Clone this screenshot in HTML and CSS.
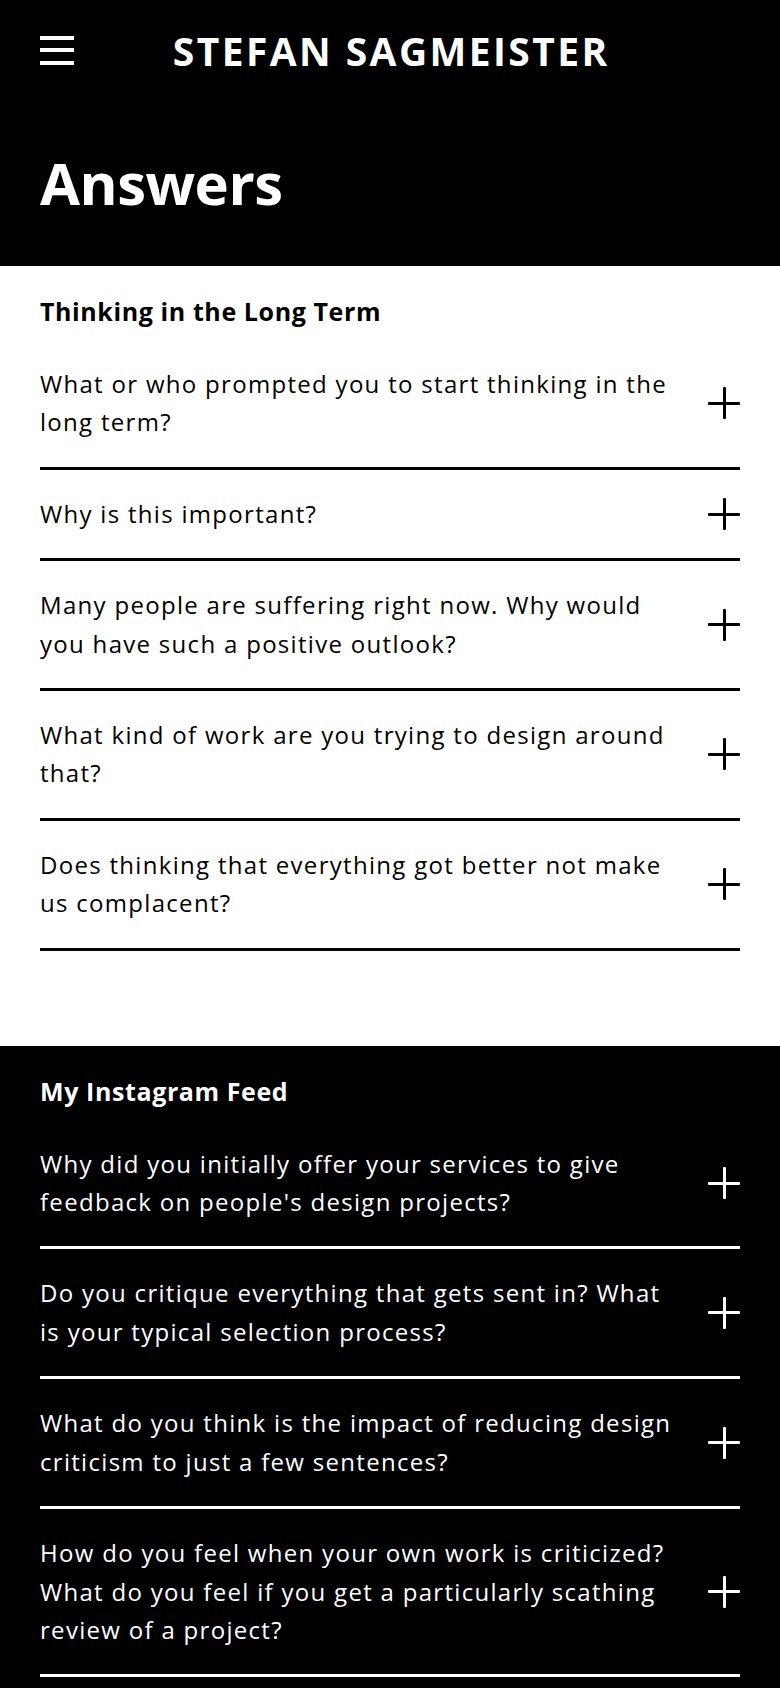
FILE: index.html
```html
<!DOCTYPE html>
<html lang="en">
<head>
<meta charset="utf-8">
<title>Answers — Stefan Sagmeister</title>
<link rel="stylesheet" href="styles.css">
</head>
<body>
<header class="top">
  <nav class="nav">
    <button class="menu" aria-label="Menu">
      <span></span><span></span><span></span>
    </button>
    <div class="brand">STEFAN SAGMEISTER</div>
    <div class="spacer"></div>
  </nav>
  <h1 class="page-title">Answers</h1>
</header>

<section class="faq faq-light">
  <h2 class="faq-heading">Thinking in the Long Term</h2>
  <ul class="faq-list">
    <li class="faq-item"><span class="q">What or who prompted you to start thinking in the<br>long term?</span><span class="plus"></span></li>
    <li class="faq-item"><span class="q">Why is this important?</span><span class="plus"></span></li>
    <li class="faq-item"><span class="q">Many people are suffering right now. Why would<br>you have such a positive outlook?</span><span class="plus"></span></li>
    <li class="faq-item"><span class="q">What kind of work are you trying to design around<br>that?</span><span class="plus"></span></li>
    <li class="faq-item"><span class="q">Does thinking that everything got better not make<br>us complacent?</span><span class="plus"></span></li>
  </ul>
</section>

<section class="faq faq-dark">
  <h2 class="faq-heading">My Instagram Feed</h2>
  <ul class="faq-list">
    <li class="faq-item"><span class="q">Why did you initially offer your services to give<br>feedback on people's design projects?</span><span class="plus"></span></li>
    <li class="faq-item"><span class="q">Do you critique everything that gets sent in? What<br>is your typical selection process?</span><span class="plus"></span></li>
    <li class="faq-item"><span class="q">What do you think is the impact of reducing design<br>criticism to just a few sentences?</span><span class="plus"></span></li>
    <li class="faq-item"><span class="q">How do you feel when your own work is criticized?<br>What do you feel if you get a particularly scathing<br>review of a project?</span><span class="plus"></span></li>
  </ul>
</section>
</body>
</html>
```

FILE: styles.css
```css
* { box-sizing: border-box; }

html, body {
  margin: 0;
  padding: 0;
}

body {
  font-family: "Open Sans", Lato, Arial, sans-serif;
  background: #000;
  color: #000;
  -webkit-font-smoothing: antialiased;
}

.top {
  background: #000;
  color: #fff;
  padding: 0 40px;
  height: 266px;
}

.nav {
  display: grid;
  grid-template-columns: 1fr auto 1fr;
  align-items: center;
  height: 100px;
}

.menu {
  display: flex;
  flex-direction: column;
  gap: 8.5px;
  width: 34px;
  padding: 0;
  border: 0;
  background: none;
  justify-self: start;
}

.menu span {
  display: block;
  height: 4px;
  background: #fff;
}

.brand {
  font-size: 39px;
  font-weight: 700;
  letter-spacing: 2.4px;
  line-height: 1;
  margin-right: -2.4px;
}

.page-title {
  margin: 54px 0 0;
  font-size: 58px;
  font-weight: 700;
  letter-spacing: -0.5px;
  line-height: 1;
}

.faq {
  padding: 30px 40px 94px;
}

.faq-light {
  background: #fff;
  color: #000;
  padding-bottom: 95px;
}

.faq-dark {
  background: #000;
  color: #fff;
}

.faq-heading {
  margin: 0 0 14px;
  font-size: 25px;
  font-weight: 700;
  letter-spacing: 0.6px;
  line-height: 30px;
}

.faq-list {
  list-style: none;
  margin: 0;
  padding: 0;
}

.faq-item {
  display: flex;
  align-items: center;
  justify-content: space-between;
  gap: 20px;
  padding: 25px 0;
  border-bottom: 3px solid currentColor;
}

.q {
  flex: 1;
  font-size: 24px;
  letter-spacing: 1.3px;
  line-height: 38.4px;
}

.plus {
  position: relative;
  flex: none;
  width: 32px;
  height: 32px;
}

.plus::before,
.plus::after {
  content: "";
  position: absolute;
  background: currentColor;
  border-radius: 1px;
}

.plus::before {
  left: 0;
  right: 0;
  top: 14.5px;
  height: 3px;
}

.plus::after {
  top: 0;
  bottom: 0;
  left: 14.5px;
  width: 3px;
}
```
